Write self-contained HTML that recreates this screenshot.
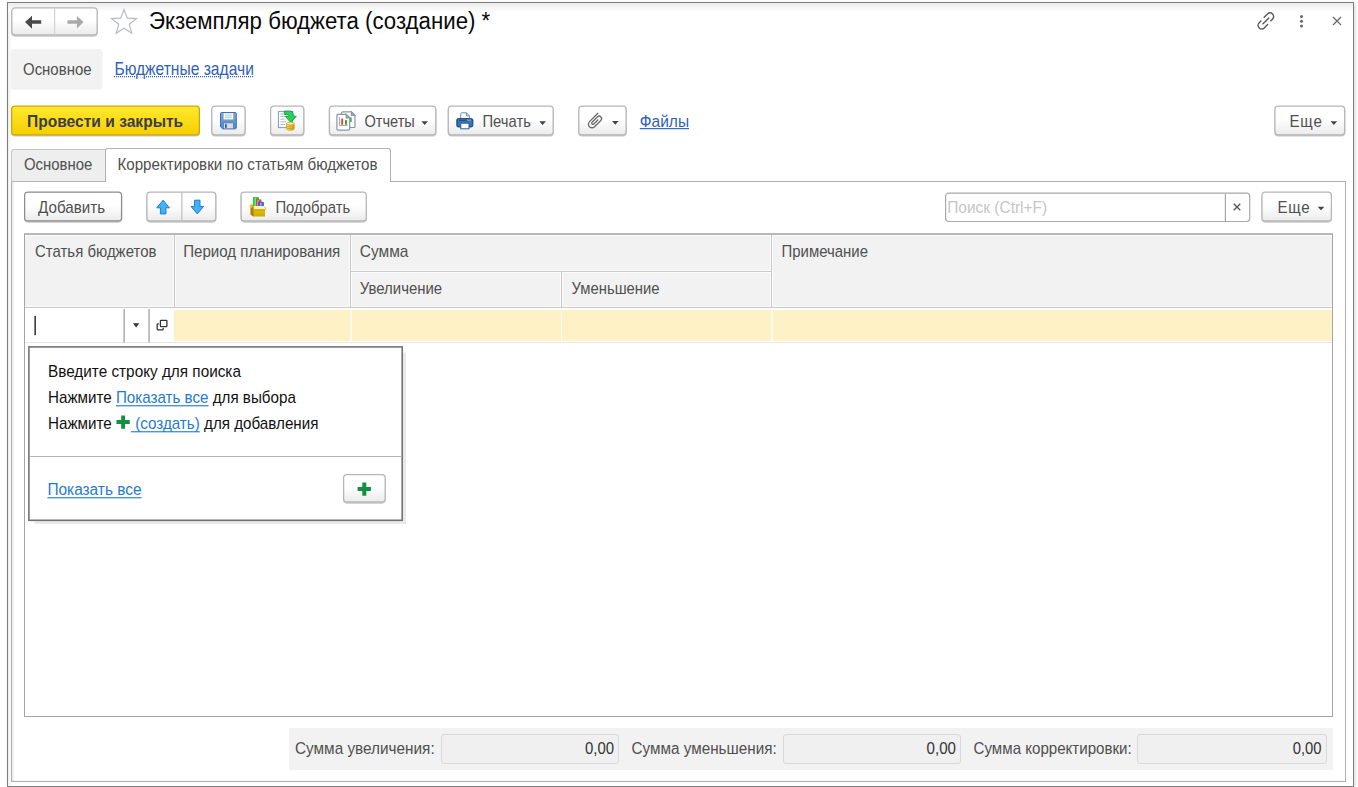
<!DOCTYPE html>
<html lang="ru">
<head>
<meta charset="utf-8">
<title>Экземпляр бюджета (создание)</title>
<style>
*{box-sizing:border-box;margin:0;padding:0}
html,body{width:1358px;height:787px;overflow:hidden;background:#fff}
body{font-family:"Liberation Sans",sans-serif;font-size:15px;color:#4a4a4a;position:relative}
.abs{position:absolute}
#frame{left:7px;top:2px;width:1347px;height:785px;border:1px solid #7e7e7e;background:#fff;box-shadow:1px 1px 4px rgba(0,0,0,.16),inset 4px 0 4px -3px rgba(0,0,0,.10)}
#topgrad{left:8px;top:3px;width:1345px;height:9px;background:linear-gradient(#ebebeb,#fff)}
.btn{position:absolute;border:1px solid #bdbdbd;border-bottom-color:#a2a2a2;border-radius:3px;background:linear-gradient(#fff 45%,#ececec);box-shadow:0 1px 1px rgba(0,0,0,.22)}
.txt,.lnk{position:absolute;white-space:nowrap;line-height:20px}
.lnk{text-decoration:underline}
.caret{position:absolute;width:0;height:0;border-left:3.4px solid transparent;border-right:3.4px solid transparent;border-top:3.6px solid #444}
.vl{position:absolute;width:3px;background:#c9c9c9;border-left:1px solid #fbfbfb;border-right:1px solid #fbfbfb}
.hl{position:absolute;height:3px;background:#c9c9c9;border-top:1px solid #fbfbfb;border-bottom:1px solid #fbfbfb}
.fld{position:absolute;border:1px solid #d9d9d9;border-radius:3px;background:#f0f0f0}
</style>
</head>
<body>
<svg width="0" height="0" style="position:absolute"><defs>
<linearGradient id="gBtn" x1="0" y1="0" x2="0" y2="1"><stop offset="0" stop-color="#fff"/><stop offset=".45" stop-color="#fff"/><stop offset="1" stop-color="#ebebeb"/></linearGradient>
<linearGradient id="gYel" x1="0" y1="0" x2="0" y2="1"><stop offset="0" stop-color="#ffe92f"/><stop offset="1" stop-color="#f6cf00"/></linearGradient>
</defs></svg>
<div id="frame" class="abs"></div>
<div id="topgrad" class="abs"></div>

<!-- title row -->
<svg class="abs" style="left:9px;top:5px" width="92" height="35"><rect x="2.20" y="3.40" width="86.60" height="28.30" rx="3.83" fill="rgba(0,0,0,0.22)"/><rect x="2.82" y="2.92" width="85.35" height="27.05" rx="3.20" fill="url(#gBtn)" stroke="#b6b6b6" stroke-width="1.25"/></svg>

<svg class="abs" style="left:52px;top:7px" width="5" height="30"><rect x="2.0" y="1.3" width="1.2" height="26.5" fill="#d2d2d2"/></svg>
<svg class="abs" style="left:110px;top:8px" width="28" height="27" viewBox="0 0 28 27"><path d="M14 1.6 L17.3 10.2 L26.4 10.6 L19.3 16.3 L21.7 25.2 L14 20.2 L6.3 25.2 L8.7 16.3 L1.6 10.6 L10.7 10.2 Z" fill="#fff" stroke="#b4bac2" stroke-width="1.2" stroke-linejoin="miter"/></svg>
<div class="txt" id="title" style="left:149.00px;top:8.69px;font-size:22.24px;line-height:26px;color:#0a0a0a;transform-origin:0 20.71px;transform:scaleY(1.04);">Экземпляр бюджета (создание) *</div>


<svg class="abs" style="left:1256px;top:11px" width="20" height="20" viewBox="0 0 20 20" fill="none" stroke="#5c5c5c" stroke-width="1.45" stroke-linecap="round"><path d="M8.2 6.2 L11.5 2.9 a3.6 3.6 0 0 1 5.1 5.1 L14.8 9.8"/><path d="M11.6 13.6 L8.3 16.9 a3.6 3.6 0 0 1 -5.1 -5.1 L5 10"/><path d="M7 12.8 L12.8 7"/></svg>
<div class="abs" style="left:1300px;top:14.5px;width:3.4px;height:3.4px;border-radius:50%;background:#666;box-shadow:0 4.8px 0 #666,0 9.6px 0 #666"></div>
<svg class="abs" style="left:1332px;top:16px" width="10" height="10" viewBox="0 0 10 10" stroke="#666" stroke-width="1.2"><path d="M1 1 L9 9 M9 1 L1 9"/></svg>

<!-- nav row -->
<svg class="abs" style="left:9px;top:47px" width="98" height="46"><rect x="2" y="2.1" width="91.7" height="40.6" rx="3.5" fill="#f2f2f2"/></svg>
<div class="txt" id="nav1" style="left:23.00px;top:59.82px;font-size:14.96px;line-height:20px;color:#4f4f4f;transform-origin:0 15.18px;transform:scaleY(1.12);">Основное</div>

<div class="txt" id="nav2" style="left:114.40px;top:59.59px;font-size:15.61px;line-height:20px;color:#2f5fbb;transform-origin:0 15.41px;transform:scaleY(1.12);text-decoration:underline dotted;text-decoration-thickness:1px;text-underline-offset:1.2px">Бюджетные задачи</div>


<!-- command bar -->
<svg class="abs" style="left:9px;top:103px" width="194" height="37"><rect x="2.00" y="3.60" width="189.00" height="29.90" rx="3.83" fill="rgba(0,0,0,0.22)"/><rect x="2.62" y="3.12" width="187.75" height="28.65" rx="3.20" fill="url(#gYel)" stroke="#cfa900" stroke-width="1.25"/></svg>

<div class="txt" id="post" style="left:27.00px;top:111.60px;font-size:15.58px;line-height:20px;color:#3d3d4a;transform-origin:0 15.40px;transform:scaleY(1.07);font-weight:bold">Провести и закрыть</div>

<svg class="abs" style="left:209px;top:103px" width="40" height="37"><rect x="2.20" y="3.60" width="34.50" height="29.90" rx="3.83" fill="rgba(0,0,0,0.22)"/><rect x="2.82" y="3.12" width="33.25" height="28.65" rx="3.20" fill="url(#gBtn)" stroke="#b6b6b6" stroke-width="1.25"/></svg>

<svg class="abs" style="left:268px;top:103px" width="40" height="37"><rect x="2.00" y="3.60" width="34.40" height="29.90" rx="3.83" fill="rgba(0,0,0,0.22)"/><rect x="2.62" y="3.12" width="33.15" height="28.65" rx="3.20" fill="url(#gBtn)" stroke="#b6b6b6" stroke-width="1.25"/></svg>

<svg class="abs" style="left:326px;top:103px" width="114" height="37"><rect x="2.80" y="3.60" width="107.60" height="29.90" rx="3.83" fill="rgba(0,0,0,0.22)"/><rect x="3.43" y="3.12" width="106.35" height="28.65" rx="3.20" fill="url(#gBtn)" stroke="#b6b6b6" stroke-width="1.25"/></svg>

<div class="txt" id="rep" style="left:364.40px;top:111.95px;font-size:14.58px;line-height:20px;color:#4f4f4f;transform-origin:0 15.05px;transform:scaleY(1.12);">Отчеты</div>

<svg class="abs" style="left:445px;top:103px" width="112" height="37"><rect x="2.70" y="3.60" width="106.10" height="29.90" rx="3.83" fill="rgba(0,0,0,0.22)"/><rect x="3.32" y="3.12" width="104.85" height="28.65" rx="3.20" fill="url(#gBtn)" stroke="#b6b6b6" stroke-width="1.25"/></svg>

<div class="txt" id="prn" style="left:482.40px;top:111.87px;font-size:14.80px;line-height:20px;color:#4f4f4f;transform-origin:0 15.13px;transform:scaleY(1.12);">Печать</div>

<svg class="abs" style="left:576px;top:103px" width="54" height="37"><rect x="2.20" y="3.60" width="48.50" height="29.90" rx="3.83" fill="rgba(0,0,0,0.22)"/><rect x="2.83" y="3.12" width="47.25" height="28.65" rx="3.20" fill="url(#gBtn)" stroke="#b6b6b6" stroke-width="1.25"/></svg>

<div class="lnk" id="files" style="left:639.80px;top:111.63px;font-size:15.50px;line-height:20px;color:#2f5fbb;transform-origin:0 15.37px;transform:scaleY(1.12);text-decoration-skip-ink:none;text-decoration-thickness:1.4px">Файлы</div>

<svg class="abs" style="left:1272px;top:103px" width="77" height="37"><rect x="2.30" y="3.60" width="71.00" height="29.90" rx="3.83" fill="rgba(0,0,0,0.22)"/><rect x="2.92" y="3.12" width="69.75" height="28.65" rx="3.20" fill="url(#gBtn)" stroke="#b6b6b6" stroke-width="1.25"/></svg>

<div class="txt" id="more1" style="left:1289.50px;top:111.77px;font-size:15.10px;line-height:20px;color:#4f4f4f;transform-origin:0 15.23px;transform:scaleY(1.12);letter-spacing:.8px">Еще</div>


<!-- tabs -->
<div class="abs" id="panel" style="left:11px;top:181px;width:1335px;height:601px;border:1px solid #b0b0b0;background:#fff;box-shadow:inset 3px 0 3px -2px rgba(0,0,0,.13),inset 0 -2px 2px -2px rgba(0,0,0,.12)"></div>
<div class="abs" style="left:11px;top:149px;width:96px;height:33px;border:1px solid #c4c4c4;border-bottom-color:#b3b3b3;background:#eee;border-radius:3px 0 0 0"></div>
<div class="txt" id="tab1" style="left:24.00px;top:155.33px;font-size:14.92px;line-height:20px;color:#4f4f4f;transform-origin:0 15.17px;transform:scaleY(1.12);">Основное</div>

<div class="abs" style="left:105px;top:148px;width:286px;height:34px;border:1px solid #b3b3b3;border-bottom:none;background:#fff;border-radius:3px 3px 0 0"></div>
<div class="txt" id="tab2" style="left:117.40px;top:155.24px;font-size:15.18px;line-height:20px;color:#4f4f4f;transform-origin:0 15.26px;transform:scaleY(1.12);">Корректировки по статьям бюджетов</div>


<!-- table toolbar -->
<svg class="abs" style="left:22px;top:189px" width="104" height="37"><rect x="2.00" y="3.70" width="98.20" height="30.00" rx="3.83" fill="rgba(0,0,0,0.22)"/><rect x="2.62" y="3.22" width="96.95" height="28.75" rx="3.20" fill="url(#gBtn)" stroke="#8c8c8c" stroke-width="1.25"/></svg>

<div class="txt" id="add" style="left:38.00px;top:197.74px;font-size:15.19px;line-height:20px;color:#4f4f4f;transform-origin:0 15.26px;transform:scaleY(1.12);">Добавить</div>

<svg class="abs" style="left:144px;top:189px" width="76" height="37"><rect x="2.30" y="3.70" width="70.10" height="30.00" rx="3.83" fill="rgba(0,0,0,0.22)"/><rect x="2.93" y="3.22" width="68.85" height="28.75" rx="3.20" fill="url(#gBtn)" stroke="#b6b6b6" stroke-width="1.25"/></svg>

<svg class="abs" style="left:180px;top:191px" width="5" height="32"><rect x="1.2" y="1.8" width="1.3" height="28.6" fill="#c2c2c2"/></svg>
<svg class="abs" style="left:238px;top:189px" width="132" height="37"><rect x="2.50" y="3.70" width="126.40" height="30.00" rx="3.83" fill="rgba(0,0,0,0.22)"/><rect x="3.12" y="3.22" width="125.15" height="28.75" rx="3.20" fill="url(#gBtn)" stroke="#b6b6b6" stroke-width="1.25"/></svg>

<div class="txt" id="pick" style="left:275.40px;top:197.84px;font-size:14.90px;line-height:20px;color:#4f4f4f;transform-origin:0 15.16px;transform:scaleY(1.12);">Подобрать</div>

<svg class="abs" style="left:943px;top:190px" width="312" height="36"><rect x="2.6" y="3.2" width="304.1" height="28.3" rx="3" fill="#fff" stroke="#a9a9a9" stroke-width="1.2"/><rect x="281.8" y="3.6" width="1.2" height="27.6" fill="#a9a9a9"/></svg>
<div class="txt" id="srch" style="left:947.20px;top:197.64px;font-size:15.48px;line-height:20px;color:#c6c6c6;transform-origin:0 15.36px;transform:scaleY(1.12);">Поиск (Ctrl+F)</div>

<svg class="abs" style="left:1233px;top:203px" width="8" height="8" viewBox="0 0 8 8" stroke="#555" stroke-width="1.3"><path d="M0.7 0.7 L7.3 7.3 M7.3 0.7 L0.7 7.3"/></svg>
<svg class="abs" style="left:1259px;top:189px" width="76" height="37"><rect x="2.40" y="3.70" width="70.60" height="30.00" rx="3.83" fill="rgba(0,0,0,0.22)"/><rect x="3.03" y="3.22" width="69.35" height="28.75" rx="3.20" fill="url(#gBtn)" stroke="#b6b6b6" stroke-width="1.25"/></svg>

<div class="txt" id="more2" style="left:1277.40px;top:197.77px;font-size:15.10px;line-height:20px;color:#4f4f4f;transform-origin:0 15.23px;transform:scaleY(1.12);letter-spacing:.8px">Еще</div>


<!-- table -->
<div class="abs" style="left:24px;top:233px;width:1309px;height:484px;border:1px solid #a6a6a6;border-top:2px solid #b8b8b8;background:#fff"></div>
<div class="abs" style="left:25px;top:235px;width:1307px;height:72px;background:#f2f2f2;border-top:1px solid #fbfbfb"></div>
<div class="hl" style="left:25px;top:306px;width:1307px;border-bottom-color:#fff"></div>
<div class="vl" style="left:172.5px;top:235px;height:72px"></div>
<div class="vl" style="left:349px;top:235px;height:72px"></div>
<div class="vl" style="left:770px;top:235px;height:72px"></div>
<div class="hl" style="left:351px;top:270px;width:420px"></div>
<div class="vl" style="left:559.5px;top:272px;height:35px"></div>
<div class="txt" id="h1" style="left:35.00px;top:241.81px;font-size:14.98px;line-height:20px;color:#505050;transform-origin:0 15.19px;transform:scaleY(1.12);">Статья бюджетов</div>

<div class="txt" id="h2" style="left:183.20px;top:241.77px;font-size:15.08px;line-height:20px;color:#505050;transform-origin:0 15.23px;transform:scaleY(1.12);">Период планирования</div>

<div class="txt" id="h3" style="left:359.80px;top:241.63px;font-size:15.49px;line-height:20px;color:#505050;transform-origin:0 15.37px;transform:scaleY(1.12);">Сумма</div>

<div class="txt" id="h4" style="left:781.60px;top:241.83px;font-size:14.93px;line-height:20px;color:#505050;transform-origin:0 15.17px;transform:scaleY(1.12);">Примечание</div>

<div class="txt" id="h5" style="left:359.80px;top:278.82px;font-size:14.96px;line-height:20px;color:#505050;transform-origin:0 15.18px;transform:scaleY(1.12);">Увеличение</div>

<div class="txt" id="h6" style="left:571.60px;top:278.86px;font-size:14.83px;line-height:20px;color:#505050;transform-origin:0 15.14px;transform:scaleY(1.12);">Уменьшение</div>


<!-- active row -->
<div class="abs" style="left:174px;top:310px;width:1158px;height:31px;background:#fff1c6"></div>
<div class="abs" style="left:350px;top:310px;width:1.5px;height:31px;background:#fffaf0"></div>
<div class="abs" style="left:560.5px;top:310px;width:1.5px;height:31px;background:#fffaf0"></div>
<div class="abs" style="left:771px;top:310px;width:1.5px;height:31px;background:#fffaf0"></div>
<div class="abs" style="left:25px;top:342px;width:1307px;height:1px;background:#e6e6e6"></div>

<!-- popup -->
<div class="abs" style="left:29px;top:347px;width:373px;height:173px;background:#fff;box-shadow:3.5px 3.5px 1px 0 rgba(0,0,0,.085)"></div>
<svg class="abs" style="left:26px;top:344px" width="380" height="180"><rect x="2.9" y="2.9" width="373.3" height="173.4" fill="none" stroke="#727272" stroke-width="1.6"/></svg>
<div class="abs" style="left:29.5px;top:456px;width:372px;height:1px;background:#b3b3b3"></div>
<div class="txt" id="p1" style="left:48.00px;top:361.69px;font-size:15.32px;line-height:20px;color:#111;transform-origin:0 15.31px;transform:scaleY(1.12);">Введите строку для поиска</div>

<div class="txt" id="p2" style="left:48.00px;top:387.74px;font-size:15.18px;line-height:20px;color:#111;transform-origin:0 15.26px;transform:scaleY(1.12);">Нажмите <span style="color:#1f7ad2;text-decoration:underline;text-decoration-skip-ink:none;text-underline-offset:1.7px;text-decoration-thickness:1.2px">Показать все</span> для выбора</div>

<div class="txt" id="p3" style="left:48.00px;top:413.74px;font-size:15.19px;line-height:20px;color:#111;transform-origin:0 15.26px;transform:scaleY(1.12);">Нажмите <span style="display:inline-block;width:15px"></span><span style="color:#1f7ad2;text-decoration:underline;text-decoration-skip-ink:none;text-underline-offset:1.7px;text-decoration-thickness:1.2px">&nbsp;(создать)</span> для добавления</div>

<svg class="abs" style="left:116px;top:415px" width="15" height="15" viewBox="0 0 15 15"><path d="M5.2 0.4 H9 V5.1 H13.8 V8.9 H9 V13.7 H5.2 V8.9 H0.5 V5.1 H5.2 Z" fill="#0f913e"/></svg>
<div class="lnk" id="p4" style="left:47.40px;top:479.65px;font-size:15.43px;line-height:20px;color:#1f7ad2;transform-origin:0 15.35px;transform:scaleY(1.12);text-decoration-skip-ink:none;text-underline-offset:1.7px;text-decoration-thickness:1.2px">Показать все</div>

<svg class="abs" style="left:341px;top:472px" width="48" height="35"><rect x="2.00" y="3.10" width="42.80" height="28.60" rx="3.83" fill="rgba(0,0,0,0.22)"/><rect x="2.62" y="2.62" width="41.55" height="27.35" rx="3.20" fill="url(#gBtn)" stroke="#b6b6b6" stroke-width="1.25"/></svg>

<svg class="abs" style="left:357px;top:482px" width="15" height="15" viewBox="0 0 15 15"><path d="M5.3 0.4 H9.3 V5 H13.9 V9 H9.3 V13.7 H5.3 V9 H0.6 V5 H5.3 Z" fill="#0f913e"/></svg>

<!-- footer -->
<div class="abs" style="left:289px;top:728px;width:1044px;height:42px;background:#f2f2f2"></div>
<div class="txt" id="f1" style="left:295.00px;top:739.19px;font-size:15.33px;line-height:20px;color:#4f4f4f;transform-origin:0 15.31px;transform:scaleY(1.12);">Сумма увеличения:</div>

<div class="fld" style="left:441px;top:734px;width:178px;height:30px"></div>
<div class="txt" id="z1" style="left:585.00px;top:739.34px;font-size:14.90px;line-height:20px;color:#333;transform-origin:0 15.16px;transform:scaleY(1.12);">0,00</div>

<div class="txt" id="f2" style="left:631.60px;top:739.22px;font-size:15.25px;line-height:20px;color:#4f4f4f;transform-origin:0 15.28px;transform:scaleY(1.12);">Сумма уменьшения:</div>

<div class="fld" style="left:783px;top:734px;width:178px;height:30px"></div>
<div class="txt" id="z2" style="left:926.60px;top:739.27px;font-size:15.10px;line-height:20px;color:#333;transform-origin:0 15.23px;transform:scaleY(1.12);">0,00</div>

<div class="txt" id="f3" style="left:973.60px;top:739.27px;font-size:15.10px;line-height:20px;color:#4f4f4f;transform-origin:0 15.23px;transform:scaleY(1.12);">Сумма корректировки:</div>

<div class="fld" style="left:1137px;top:734px;width:190px;height:30px"></div>
<div class="txt" id="z3" style="left:1292.80px;top:739.38px;font-size:14.79px;line-height:20px;color:#333;transform-origin:0 15.12px;transform:scaleY(1.12);">0,00</div>


<!-- icons overlay -->
<svg class="abs" id="icons" style="left:0;top:0;pointer-events:none" width="1358" height="787" viewBox="0 0 1358 787">
<defs>
<linearGradient id="gSave" x1="0" y1="0" x2="0" y2="1"><stop offset="0" stop-color="#7fa8dc"/><stop offset="1" stop-color="#5585c9"/></linearGradient>
<linearGradient id="gBox" x1="0" y1="0" x2="0" y2="1"><stop offset="0" stop-color="#ecd21e"/><stop offset="1" stop-color="#d0a800"/></linearGradient>
<linearGradient id="gCoin" x1="0" y1="0" x2="1" y2="0"><stop offset="0" stop-color="#f8e27a"/><stop offset="1" stop-color="#d9a91c"/></linearGradient>
</defs>
<!-- nav arrows -->
<path d="M25 22 L32 15.7 V20.3 H41.2 V23.8 H32 V28.7 Z" fill="#4a4a4a"/>
<path d="M83.6 22 L76.9 16 V20.3 H67.4 V23.8 H76.9 V28.4 Z" fill="#a9a9a9"/>
<!-- save -->
<path d="M221.5 112.5 H235.3 a1 1 0 0 1 1 1 V127.8 a1 1 0 0 1 -1 1 H222.6 L220.5 126.8 V113.5 a1 1 0 0 1 1 -1 Z" fill="url(#gSave)" stroke="#3f70b3" stroke-width="1"/>
<rect x="223.6" y="113.2" width="9.6" height="6.2" fill="#fdfdfe"/>
<path d="M225 115.2 H231.8 M225 117.3 H231.8" stroke="#a9b9d2" stroke-width="0.9"/>
<rect x="223.4" y="122.9" width="10" height="5.9" fill="#d6dee2" stroke="#4676b6" stroke-width="0.7"/>
<rect x="225" y="124.2" width="1.8" height="3.6" fill="#2c5ca6"/>
<!-- doc + arrow + coins -->
<rect x="278.4" y="111.6" width="14.2" height="16" fill="#fff" stroke="#7c98c0" stroke-width="1"/>
<path d="M280.4 114 H284 M280.4 116.6 H285.5 M280.4 119.2 H284.5 M280.4 121.8 H286 M280.4 124.4 H285" stroke="#a3aebd" stroke-width="0.9"/>
<path d="M284.4 111 H290 Q293.2 111 293.2 114 V116.2 H296.3 L290.8 122.6 L285.3 116.2 H288.6 V115.3 Q288.6 114.5 287.8 114.5 H284.4 Z" fill="#27cf5d" stroke="#0f9e3e" stroke-width="0.9" stroke-linejoin="round"/>
<path d="M286.4 123.6 V128.8 A3.9 1.5 0 0 0 294.2 128.8 V123.6 Z" fill="url(#gCoin)" stroke="#b98f16" stroke-width="0.6"/>
<ellipse cx="290.3" cy="123.6" rx="3.9" ry="1.5" fill="#fbe88c" stroke="#b98f16" stroke-width="0.6"/>
<path d="M286.4 125.5 A3.9 1.5 0 0 0 294.2 125.5 M286.4 127.2 A3.9 1.5 0 0 0 294.2 127.2" fill="none" stroke="#b98f16" stroke-width="0.6"/>
<!-- reports -->
<path d="M342.6 111.8 H351.4 L355 115.4 V126.4 a1.1 1.1 0 0 1 -1.1 1.1 H342.6 a1.1 1.1 0 0 1 -1.1 -1.1 V112.9 a1.1 1.1 0 0 1 1.1 -1.1 Z" fill="#fff" stroke="#8797a8" stroke-width="1.2"/>
<path d="M351.4 111.8 V115.4 H355 Z" fill="#a9b4c0" stroke="#8797a8" stroke-width="1.1"/>
<rect x="350.1" y="117.4" width="1.5" height="4.6" fill="#2aa52a"/>
<path d="M338 114.4 H346.2 L349.7 117.9 V129 a1.1 1.1 0 0 1 -1.1 1.1 H338 a1.1 1.1 0 0 1 -1.1 -1.1 V115.5 a1.1 1.1 0 0 1 1.1 -1.1 Z" fill="#fff" stroke="#8797a8" stroke-width="1.2"/>
<path d="M346.2 114.4 V117.9 H349.7 Z" fill="#a9b4c0" stroke="#8797a8" stroke-width="1.1"/>
<path d="M339.4 117 V125.5 H347.6" fill="none" stroke="#909090" stroke-width="0.8"/>
<rect x="341.2" y="118.4" width="1.9" height="6.4" rx="0.6" fill="#f2422f"/>
<rect x="345" y="119.9" width="1.9" height="4.9" rx="0.6" fill="#2aa52a"/>
<!-- printer -->
<path d="M460.7 119 V113.8 a1 1 0 0 1 1 -1 H466.4 L469.4 115.8 V119 Z" fill="#fff" stroke="#6f8fb5" stroke-width="1"/>
<path d="M466.4 112.8 V115.8 H469.4" fill="none" stroke="#6f8fb5" stroke-width="1"/>
<rect x="457" y="118.8" width="15.6" height="7.8" rx="1.8" fill="#4276b2" stroke="#27588a" stroke-width="1.6"/>
<path d="M458.8 120.6 H470.8" stroke="#214e80" stroke-width="1"/>
<path d="M467.4 120.2 H468.6 M469.4 120.2 H470.6" stroke="#fff" stroke-width="0.9"/>
<rect x="460.8" y="123.2" width="8.2" height="5.6" fill="#fff" stroke="#2a5c92" stroke-width="1"/>
<!-- paperclip -->
<g transform="translate(595.3 120.9) rotate(45)" fill="none" stroke="#6a6a6a" stroke-width="1.3" stroke-linecap="round">
<path d="M-3.6 -7.2 V4.6 a3.6 3.6 0 0 0 7.2 0 V-4.2 a2.5 2.5 0 0 0 -5 0 V3.2 a1.25 1.25 0 0 0 2.5 0 V-2.4"/>
</g>
<!-- row editor -->
<rect x="123.4" y="309" width="1.5" height="33.5" fill="#adadad"/>
<rect x="148.3" y="309" width="1.5" height="33.5" fill="#adadad"/>
<rect x="34.4" y="315.8" width="1.5" height="19.4" fill="#2e2e2e"/>
<rect x="160.4" y="320.3" width="6.5" height="6.4" rx=".7" fill="none" stroke="#333" stroke-width="1.3"/>
<path d="M158.9 323.9 H157.9 a.7 .7 0 0 0 -.7 .7 V329.1 a.7 .7 0 0 0 .7 .7 H162.5 a.7 .7 0 0 0 .7 -.7 V328.1" fill="none" stroke="#333" stroke-width="1.3"/>
<!-- carets -->
<path d="M421.40 121.30 H428.00 L424.70 124.90 Z" fill="#444"/>
<path d="M539.30 121.30 H545.90 L542.60 124.90 Z" fill="#444"/>
<path d="M612.00 121.10 H618.60 L615.30 124.70 Z" fill="#444"/>
<path d="M1330.50 121.30 H1337.10 L1333.80 124.90 Z" fill="#444"/>
<path d="M1317.70 206.70 H1324.30 L1321.00 210.30 Z" fill="#444"/>
<path d="M132.95 323.30 H139.35 L136.15 327.50 Z" fill="#333"/>
<!-- up/down -->
<path d="M163.1 200.2 L169.4 207.8 H165.9 V213.9 H160.4 V207.8 H156.8 Z" fill="#45b1f5" stroke="#1b7cc6" stroke-width="1" stroke-linejoin="round"/>
<path d="M197.3 213.9 L203.6 206.4 H200 V200.2 H194.6 V206.4 H191 Z" fill="#45b1f5" stroke="#1b7cc6" stroke-width="1" stroke-linejoin="round"/>
<!-- pick box -->
<rect x="253.3" y="197.4" width="5.3" height="9" fill="#12d226" stroke="#0aa81a" stroke-width="0.5"/><rect x="254.6" y="197.8" width="1.2" height="8" fill="#7df08a"/>
<rect x="256.5" y="199.8" width="4.6" height="6.4" fill="#f2525f" stroke="#d03545" stroke-width="0.5"/><rect x="257.5" y="200.2" width="1" height="5.6" fill="#fba0a8"/>
<rect x="258.7" y="202.2" width="4.9" height="4" fill="#3a6ae6" stroke="#2448b8" stroke-width="0.5"/><rect x="260" y="203" width="1.6" height="2.6" fill="#8fb0f8"/>
<path d="M253.4 206.6 H265 L266.8 209.4 H265 V216.6 H253.4 L250.6 214.6 V208 L249.6 205.4 L252.4 204 Z" fill="url(#gBox)"/>
<path d="M253.4 206.6 L250.6 208 V214.6 L253.4 216.6 Z" fill="#b07a12"/>
<path d="M249.6 205.4 L252.4 204 L253.4 206.6 L250.6 208 Z" fill="#e0c020"/>
<path d="M253.8 206 H264.2 L265.2 209 H254.4 Z" fill="#f8f3cc"/>
<path d="M253.4 209.6 H265 V210.6 H253.4 Z" fill="#b89400" opacity=".55"/>
</svg>
</body>
</html>
